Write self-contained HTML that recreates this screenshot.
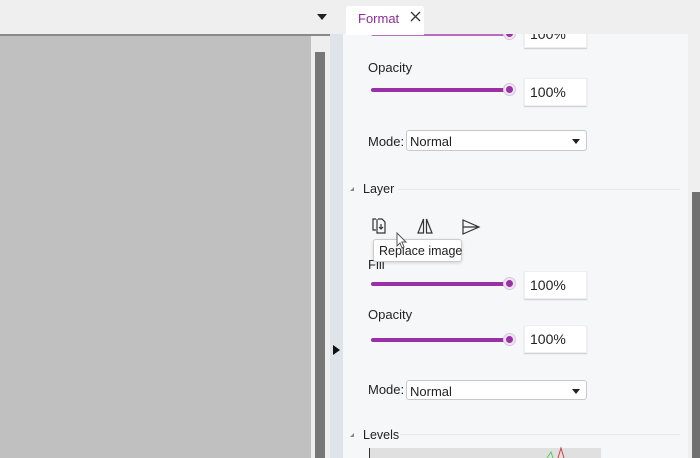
<!DOCTYPE html>
<html><head><meta charset="utf-8"><style>
*{margin:0;padding:0;box-sizing:border-box}
body{width:700px;height:458px;overflow:hidden;position:relative;background:#f6f7f9;font-family:"Liberation Sans",sans-serif;color:#222}
.a{position:absolute}
.lbl{font-size:13px}
.track{height:4px;background:#9b2fa6;border-radius:2px}
.knob{width:11px;height:11px;border-radius:50%;background:#9b2fa6;border:2px solid #f0e6f2;box-shadow:0 0 0 1px #d8c8dc}
.box{background:#fff;border:1px solid #eee;box-shadow:0 1px 1px #ccc;font-size:14px;padding:5px 0 0 5px}
.sel{background:#fff;border:1px solid #c8c8c8;border-radius:3px;font-size:13px;padding:3px 0 0 3px;white-space:nowrap}
.sel:after{content:"";position:absolute;right:6px;top:8px;border:4px solid transparent;border-top:5px solid #222}
.sec{font-size:12.5px}
.tri{width:0;height:0;border-left:4px solid transparent;border-bottom:4px solid #888}
</style></head><body>
<div class="a track" style="left:371px;top:32px;width:136px;opacity:.7"></div>
<div class="a knob" style="left:504px;top:28px"></div>
<div class="a box" style="left:524px;top:20px;width:63px;height:28px">100%</div>

<div class="a" style="left:0;top:0;width:700px;height:34px;background:#efefef"></div>
<div class="a" style="left:0;top:34px;width:330px;height:2px;background:#8a8a8a"></div>
<div class="a" style="left:317px;top:14px;border:5px solid transparent;border-top:6px solid #222"></div>
<div class="a" style="left:346px;top:6px;width:78px;height:29px;background:#fff;border-radius:3px 3px 0 0"></div>
<div class="a" style="left:358px;top:11px;font-size:13px;color:#8b2c99">Format</div>
<svg class="a" style="left:410px;top:11px" width="11" height="11"><path d="M1 1L10 10M10 1L1 10" stroke="#333" stroke-width="1.3"/></svg>
<div class="a" style="left:0;top:36px;width:311px;height:422px;background:#c0c0c0"></div>
<div class="a" style="left:311px;top:36px;width:19px;height:422px;background:#eeeeee"></div>
<div class="a" style="left:315px;top:52px;width:10px;height:406px;background:#777"></div>
<div class="a" style="left:330px;top:34px;width:13px;height:424px;background:#dfe4ea"></div>
<div class="a" style="left:333px;top:345px;border:5px solid transparent;border-left:7px solid #111;border-right:none"></div>
<div class="a" style="left:688px;top:34px;width:12px;height:424px;background:#efefef"></div>
<div class="a" style="left:692px;top:192px;width:8px;height:266px;background:#707070"></div>

<div class="a lbl" style="left:368px;top:60px">Opacity</div>
<div class="a track" style="left:371px;top:88px;width:136px"></div>
<div class="a knob" style="left:504px;top:84px"></div>
<div class="a box" style="left:524px;top:78px;width:63px;height:28px">100%</div>
<div class="a lbl" style="left:368px;top:134px">Mode:</div>
<div class="a sel" style="left:406px;top:130px;width:181px;height:21px">Normal</div>

<div class="a tri" style="left:350px;top:187px"></div>
<div class="a sec" style="left:363px;top:182px">Layer</div>
<div class="a" style="left:398px;top:189px;width:282px;height:1px;background:#e8e8ea"></div>
<svg class="a" style="left:371px;top:217px" width="18" height="18" viewBox="0 0 18 18" fill="none" stroke="#333" stroke-width="1.2"><path d="M5 2H2v11h3M7 2h4l3 3v11H6V2"/><path d="M8 10l2 2 2-2M10 7v5"/></svg>
<svg class="a" style="left:416px;top:217px" width="18" height="18" viewBox="0 0 18 18" fill="none" stroke="#333" stroke-width="1.2"><path d="M7.5 2L2 16h5.5zM10.5 2L16 16h-5.5z"/></svg>
<svg class="a" style="left:461px;top:218px" width="20" height="18" viewBox="0 0 20 18" fill="none" stroke="#333" stroke-width="1.2"><path d="M2 2l16 7L2 16zM2 9h16"/></svg>
<div class="a lbl" style="left:368px;top:257px">Fill</div>
<div class="a" style="left:373px;top:239px;width:89px;height:23px;background:#fff;border:1px solid #ccc;border-radius:3px;box-shadow:0 1px 3px rgba(0,0,0,.15);font-size:12.5px;padding:4px 0 0 5px;white-space:nowrap">Replace image</div>
<svg class="a" style="left:396px;top:232px" width="12" height="18" viewBox="0 0 12 18"><path d="M1 1v13l3-3 2 5 2-1-2-5h4z" fill="#fff" stroke="#555"/></svg>
<div class="a track" style="left:371px;top:282px;width:136px"></div>
<div class="a knob" style="left:504px;top:278px"></div>
<div class="a box" style="left:524px;top:271px;width:63px;height:28px">100%</div>
<div class="a lbl" style="left:368px;top:307px">Opacity</div>
<div class="a track" style="left:371px;top:338px;width:136px"></div>
<div class="a knob" style="left:504px;top:334px"></div>
<div class="a box" style="left:524px;top:325px;width:63px;height:28px">100%</div>
<div class="a lbl" style="left:368px;top:382px">Mode:</div>
<div class="a sel" style="left:406px;top:380px;width:181px;height:20px">Normal</div>
<div class="a tri" style="left:350px;top:433px"></div>
<div class="a sec" style="left:363px;top:428px">Levels</div>
<div class="a" style="left:400px;top:434px;width:280px;height:1px;background:#e8e8ea"></div>
<div class="a" style="left:369px;top:448px;width:232px;height:10px;background:#e0e0e0;border-left:1px solid #333"></div>
<svg class="a" style="left:545px;top:446px" width="24" height="12"><path d="M2 12L6 6 8 12" stroke="#5c5" fill="none"/><path d="M13 12L16 2 19 12" stroke="#c44" fill="none"/></svg>
</body></html>
